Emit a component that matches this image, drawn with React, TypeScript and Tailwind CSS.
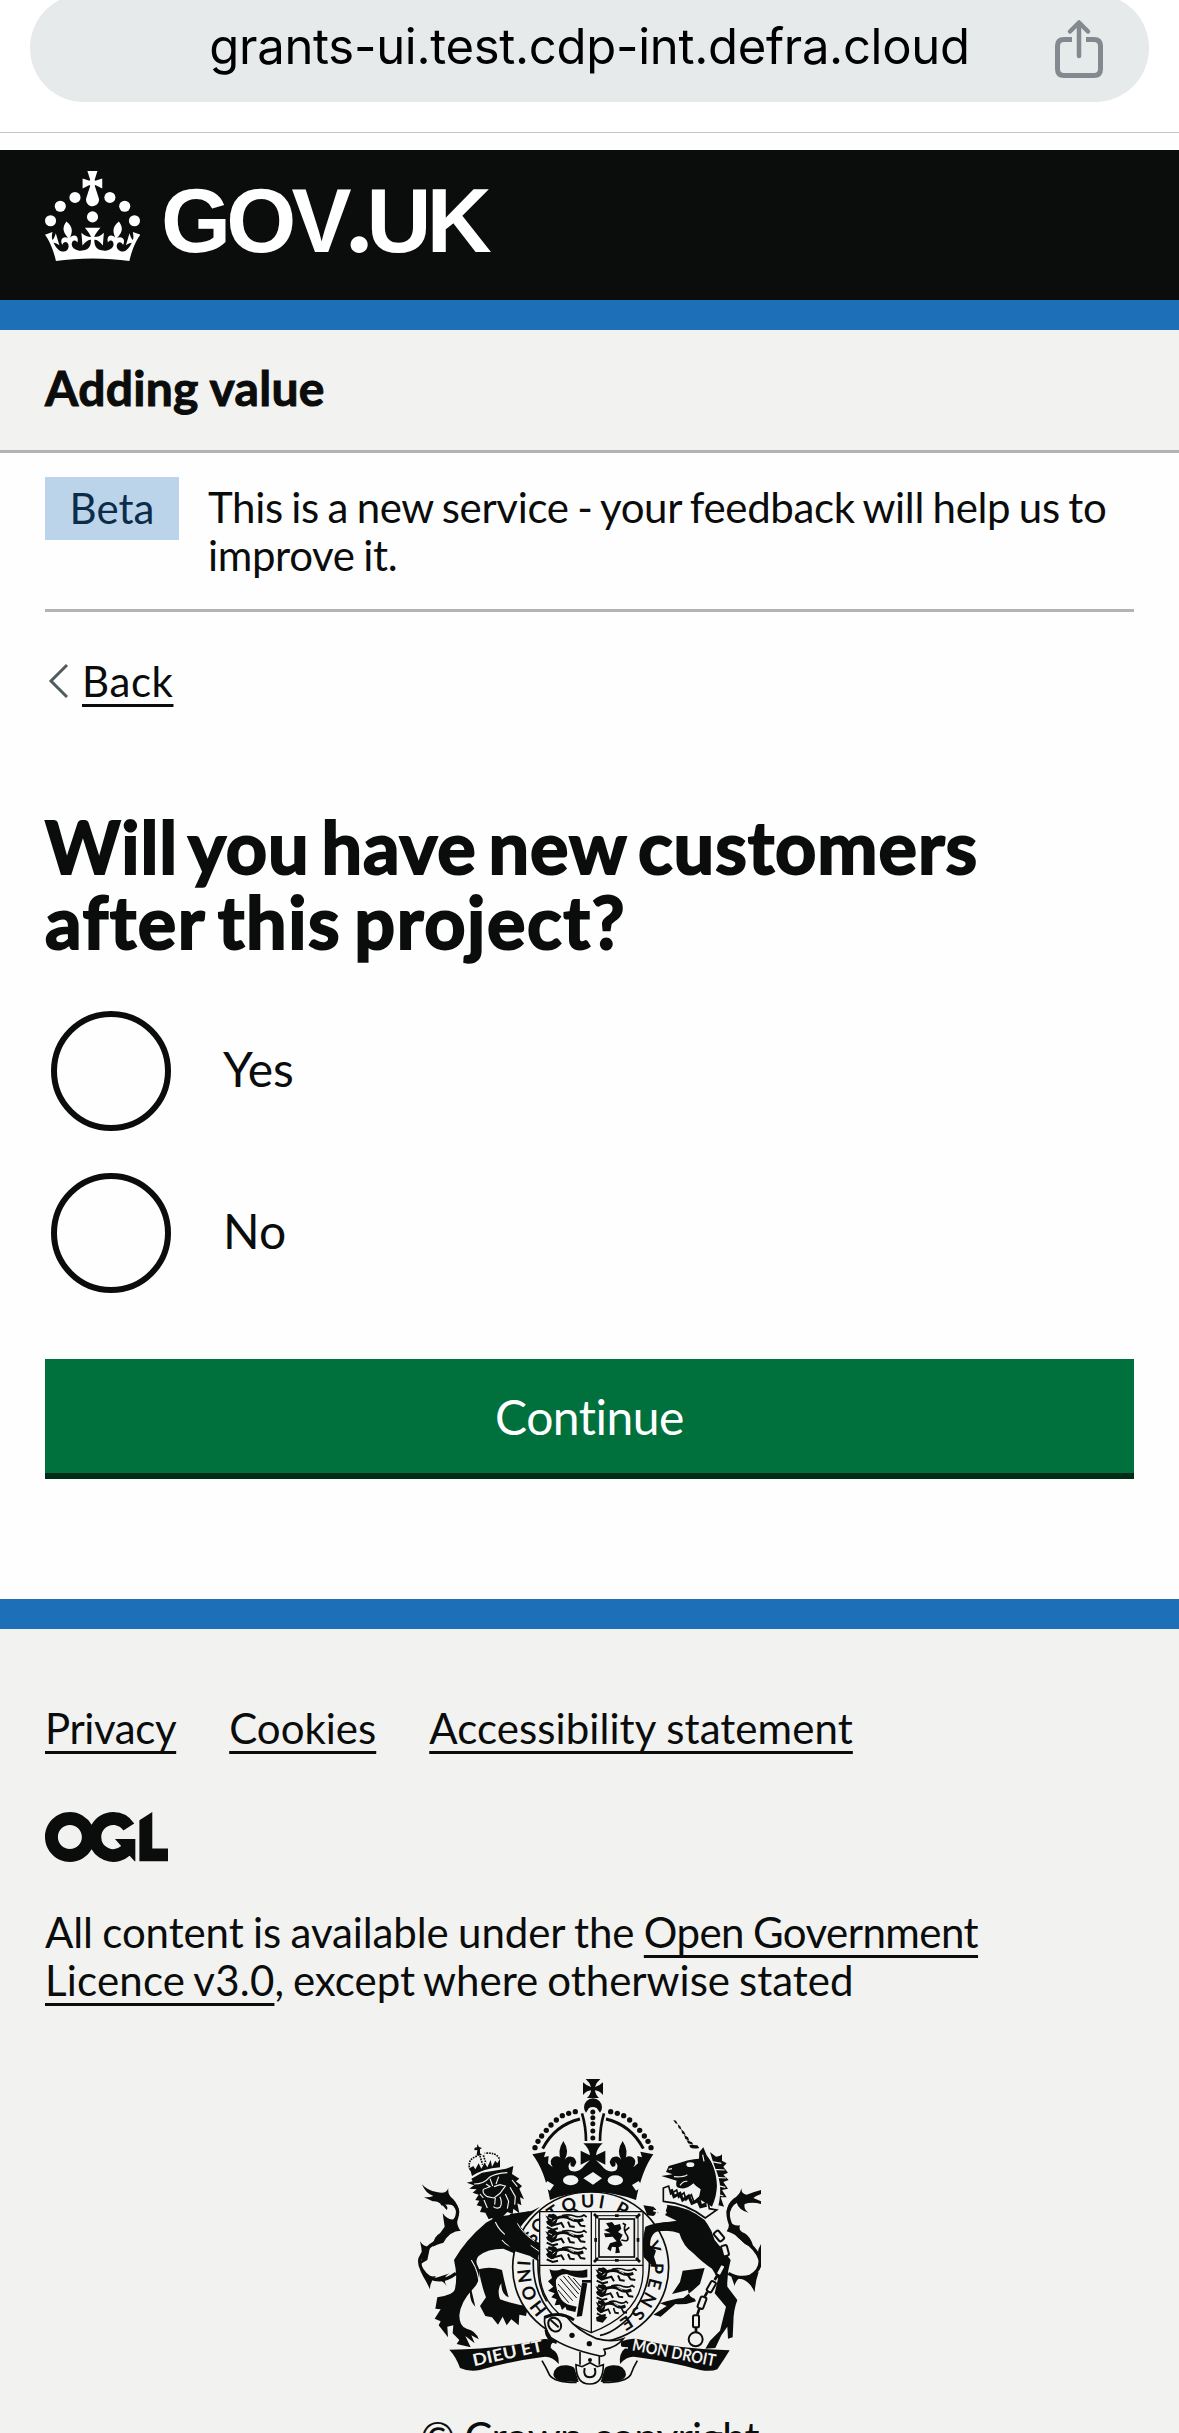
import React from "react";

function ShareIcon() {
  return (
    <svg width="48" height="60" viewBox="0 0 48 60" fill="none" stroke="#84898f" strokeWidth="5" className="mr-[46px] mt-[2px] justify-self-end">
      <path d="M17 20.500H9Q2.500 20.500 2.500 27V50Q2.500 56.500 9 56.500H39Q45.500 56.500 45.500 50V27Q45.500 20.500 39 20.500H31" />
      <path d="M24 37V4M15 12.500L24 3.500L33 12.500" strokeLinecap="round" strokeLinejoin="round" strokeWidth="4.500" />
    </svg>
  );
}

function Crown() {
  return (
    <svg width="95" height="90" viewBox="0 0 63.4 60" fill="#fff">
      <circle cx="20" cy="17.6" r="3.7" />
      <circle cx="10.2" cy="23.5" r="3.7" />
      <circle cx="3.7" cy="33.2" r="3.7" />
      <circle cx="31.7" cy="30.6" r="3.7" />
      <circle cx="43.3" cy="17.6" r="3.7" />
      <circle cx="53.2" cy="23.5" r="3.7" />
      <circle cx="59.7" cy="33.2" r="3.7" />
      <path d="M33.1,9.8c.2-.1.3-.3.5-.5l4.6,2.4v-6.8l-4.6,1.5c-.1-.2-.3-.3-.5-.5l1.9-5.900h-6.700l1.900,5.900c-.2.1-.3.3-.5.5l-4.600-1.500v6.800l4.600-2.400c.1.2.3.3.5.5l-2.600,8c-.9,2.800,1.200,5.700,4.100,5.700h0c3,0,5.100-2.900,4.100-5.700l-2.600-8ZM37,37.900s-3.400,3.800-4.100,6.100c2.200,0,4.200-.5,6.400-2.800l-.7,8.500c-2-2.800-4.400-4.100-5.700-3.800.1,3.100.5,6.700,5.800,7.200,3.700.3,6.700-1.500,7-3.800.4-2.600-2-4.300-3.700-1.600-1.400-4.500,2.400-6.100,4.900-3.200-1.900-4.500-1.800-7.700,2.400-10.900,3,4,2.600,7.300-1.200,11.100,2.400-1.300,6.200,0,4,4.600-1.200-2.800-3.700-2.200-4.200.2-.3,1.700.7,3.700,3,4.200,1.900.3,4.700-.9,7-5.900-1.300,0-2.400.7-3.900,1.700l2.400-8c.6,2.300,1.400,3.700,2.200,4.500.6-1.600.5-2.800,0-5.300l5,1.800c-2.600,3.600-5.200,8.700-7.300,17.500-7.400-1.100-15.700-1.700-24.500-1.700h0c-8.800,0-17.100.6-24.500,1.700-2.100-8.900-4.700-13.900-7.300-17.500l5-1.800c-.5,2.500-.6,3.700,0,5.300.8-.8,1.600-2.300,2.200-4.500l2.400,8c-1.500-1-2.600-1.700-3.900-1.700,2.300,5,5.200,6.200,7,5.900,2.300-.4,3.300-2.400,3-4.200-.5-2.400-3-3.100-4.200-.2-2.200-4.600,1.600-6,4-4.600-3.700-3.700-4.200-7.100-1.200-11.100,4.200,3.200,4.300,6.400,2.400,10.900,2.500-2.800,6.300-1.300,4.900,3.200-1.800-2.700-4.100-1-3.700,1.600.3,2.300,3.300,4.100,7,3.800,5.400-.5,5.700-4.200,5.800-7.200-1.300-.2-3.700,1-5.700,3.800l-.7-8.500c2.200,2.300,4.200,2.700,6.400,2.800-.7-2.300-4.100-6.100-4.100-6.100h10.600Z" />
    </svg>
  );
}

function OglMark() {
  return (
    <svg width="123" height="50" viewBox="0 0 483.2 195.7" fill="#0b0c0c">
      <path d="M421.500 142.800V.1l-50.700 32.300v161.100h112.400v-50.700zm-122.300-9.600A47.120 47.120 0 0 1 221 97.800c0-26 21.100-47.100 47.100-47.100 16.700 0 31.400 8.700 39.700 21.800l42.700-27.200A97.630 97.630 0 0 0 268.100 0c-36.500 0-68.300 20.100-85.100 49.700A98 98 0 0 0 97.800 0C43.900 0 0 43.900 0 97.800s43.900 97.800 97.800 97.800c36.500 0 68.300-20.100 85.100-49.700a97.760 97.760 0 0 0 149.600 25.400l19.400 22.200h3v-87.800h-80l24.300 27.500zM97.800 145c-26 0-47.100-21.100-47.100-47.100s21.100-47.100 47.100-47.100 47.100 21.100 47.100 47.100S123.800 145 97.800 145" />
    </svg>
  );
}

const INK = "#0b0c0c";
const PAPER = "#f2f2f0";

const leftPearls = [
  [526, 155], [506, 160], [487, 167], [469, 180], [453, 195], [439, 211], [425, 228], [414, 244], [405, 263],
];

/* Garter legend: each piece with its distance along the ring and its length. */
const garterLegend = [
  { words: "HONI", start: 142, length: 160 },
  { words: "SO", start: 352, length: 76 },
  { words: "TQUI P", start: 442, length: 230 },
  { words: "Y", start: 774, length: 34 },
  { words: "PENSE", start: 834, length: 208 },
];

/* One lion passant of the English quarters, about 126 units wide. */
function Passant({ x, y, s = 1 }: { x: number; y: number; s?: number }) {
  return (
    <g transform={`translate(${x} ${y}) scale(${s} 1)`}>
      <path d="M2 -17L8 -13L12 -21L20 -20L26 -22L34 -18L40 -10L36 4L28 16L20 18L8 10L4 2L10 -2z" fill={INK} />
      <path d="M34 -8Q60 -18 78 -6Q96 4 116 -4" stroke={INK} strokeWidth="9" fill="none" />
      <path d="M52 -16Q74 -22 92 -14Q108 -10 118 -18L126 -12" stroke={INK} strokeWidth="5" fill="none" />
      <path d="M28 12L50 6L58 20M70 2L76 16L90 18M100 2L108 14L122 16M6 18L24 26L40 22" stroke={INK} strokeWidth="6" fill="none" />
      <path d="M12 -10L22 -6M24 2L32 -4M72 -12L88 -4" stroke={PAPER} strokeWidth="2.500" />
    </g>
  );
}

function CoatOfArms() {
  return (
    <svg width="343" height="307" viewBox="54 54 1029 921" fill={INK} className="block">
      <defs>
        <path id="garter-ring" d="M571 802A180 180 0 0 1 571 442A180 180 0 0 1 571 802" />
        <path id="motto-left" d="M222 919Q330 895 436 872" />
        <path id="motto-right" d="M694 871Q830 897 950 921" />
      </defs>

      {/* tails */}
      <g fill="none" stroke={INK}>
        <path d="M168 640Q125 672 88 652Q54 628 60 596Q72 566 112 543Q170 505 173 455Q168 418 122 432" strokeWidth="10" />
        <path d="M985 640Q1020 660 1052 648Q1084 628 1080 598Q1070 566 1030 540Q984 505 984 455Q994 415 1030 425" strokeWidth="10" />
      </g>
      <path d="M66 373Q82 392 110 396Q140 404 145 383Q142 405 160 418Q180 440 176 468Q160 420 128 428Q148 440 140 450Q118 420 98 424L72 412Q92 412 100 408Q76 400 66 373zM128 460Q142 480 160 478L174 460Q166 495 182 512Q150 512 130 548Q112 552 98 560Q100 530 120 520L134 500zM60 544Q70 560 90 562L82 600L62 612Q70 580 60 544zM84 652L108 648Q90 664 90 688Q80 666 70 650L60 630zM104 655Q126 658 140 678Q124 650 150 640z" />
      <path d="M1024 385Q1024 402 1040 404Q1060 396 1083 390V402Q1066 408 1060 414L1083 424V432Q1056 424 1034 432Q1030 448 1046 458Q1016 450 1010 428Q990 440 988 470Q972 440 1000 416Q1020 406 1024 385zM986 480Q1000 500 1020 496Q1014 512 1034 520Q1052 530 1060 560Q1040 560 1026 544Q1006 520 980 514Q990 500 986 480zM1083 552Q1068 574 1076 600L1083 612zM1076 636Q1066 664 1064 697Q1050 664 1020 655L1050 645zM1018 655Q1006 664 1004 678L994 650z" />

      {/* lion */}
      <path d="M258 488L290 470L350 462L388 454L352 500Q372 528 400 540L432 556L440 580L432 606L410 588L414 604L390 586L396 600L362 588L310 566Q262 566 236 588Q222 602 236 624Q246 660 216 690Q182 726 178 766Q178 800 200 806Q228 812 236 838L214 826L224 850L196 828L212 862L170 852L178 840L158 820L160 796L142 800L144 832L116 796L122 784L104 776L122 748L106 746L112 712Q158 706 164 690Q174 650 162 600Q196 540 258 488z" />
      <path d="M236 628Q270 618 306 630Q314 670 326 712Q304 704 304 670Q290 690 300 718Q344 734 384 738L378 768L358 764L356 796L334 778L320 796L308 770L294 794L276 772L256 768L240 738L258 712Q244 676 236 628zM212 680L226 740Q204 720 212 680z" />
      <path d="M200 368L218 364L214 356L246 338L318 326L340 318L336 342L358 356L348 364L366 378L358 386L372 418L360 412L364 436L352 430L358 460L340 446L338 462L322 456L288 490L276 474L266 478L256 458L240 456L246 440L230 436L238 422L226 420L236 404L218 398L230 388L208 386L222 376z" />
      <g fill="none" stroke={PAPER} strokeWidth="3.500">
        <path d="M222 372Q252 372 268 352Q286 340 322 338M258 372L270 380L250 388Q246 400 262 410L282 414L300 400L316 378L300 374L282 380M270 356L278 378M296 350L288 372M286 414L284 434M300 410Q308 430 300 442Q290 448 280 440M316 402L326 424L322 446M330 382L346 410L344 434M336 360L352 380M252 420L262 444M240 402L250 414M286 486Q300 520 350 548M306 540Q320 560 360 570M214 600Q240 640 238 690M392 556L420 580M400 548L430 570" />
      </g>
      <path d="M232 252L237 261L246 264L240 268L240 280L246 284L234 288L230 284L232 270L223 271L224 263L231 262z" />
      <path d="M212 334L206 326L220 318L226 328L236 310L244 326L254 308L262 322L272 300L276 320L286 302L292 310L300 296L300 322Q250 326 216 348z" />
      <path d="M208 322Q204 296 232 288M298 296Q288 276 254 280M240 288L248 314M250 286L258 310" fill="none" stroke={INK} strokeWidth="5" strokeDasharray="5 3" />

      {/* unicorn */}
      <path d="M820 180L828 182L833 192L826 190zM833 193L841 199L845 210L836 204zM844 208L853 216L857 226L846 220zM852 224L864 232L868 242L856 237zM860 240L876 247L880 254L864 250zM868 254L892 256L898 264Q878 268 870 262z" />
      <path d="M897 296L898 276L910 262L920 286Q950 320 952 370Q950 410 936 440L896 416L902 388Q888 380 880 370Q860 390 838 384Q824 380 830 362L784 348L818 343L798 336L806 318L840 308Q862 300 882 298z" />
      <path d="M930 276L948 290Q964 288 966 282L966 302L980 310L970 320L984 338L970 344L986 360L970 366L984 386L966 390L980 412L962 412L972 440L956 436L950 456Q974 380 944 322z" />
      <path d="M926 288Q966 350 946 440M935 305L964 310M944 328L974 330M950 352L978 354M951 376L976 382M949 402L970 408M908 284L912 304M806 328L816 326M822 350Q850 352 862 344M840 376Q850 362 862 364" fill="none" stroke={PAPER} strokeWidth="3.500" />
      <ellipse cx="871" cy="314" rx="12" ry="7" fill={PAPER} />
      <path d="M790 384L806 378L812 402L830 390L836 412L852 398L858 420L874 404L882 426L898 412L904 436L924 426L928 446L950 450L916 474Q860 430 790 424z" fill={PAPER} stroke={INK} strokeWidth="5" />
      <path d="M814 388L822 410L840 400L848 420L866 408L876 430L894 422L902 440L920 436" fill="none" stroke={INK} strokeWidth="9" />
      <path d="M730 436L760 440L776 456L760 468L742 466zM800 434Q866 440 914 480Q924 494 934 512L944 540L972 574L992 600Q980 640 982 680L1012 720Q1000 750 1000 790L998 832L984 836L982 800L964 826L946 864L916 866L930 842L960 812L978 740L944 700L954 656L936 626Q910 610 880 580Q850 560 838 520Q812 508 776 514Q754 524 750 556L768 572L762 590L774 628L748 606L752 632L730 590L728 540L736 500Q760 490 830 482L796 466z" />
      <path d="M914 624L848 632L840 666L816 702L864 690Q866 712 884 716L888 724Q856 736 826 732L782 770L760 764L800 738L780 730Q820 716 850 714L880 690L900 672z" />
      <path d="M776 428L766 476M800 436L786 480M760 452L800 458M742 560Q764 580 768 620" fill="none" stroke={PAPER} strokeWidth="5" />
      <g fill={PAPER} stroke={INK} strokeWidth="6">
        <rect x="-9" y="-16" width="18" height="32" rx="5" transform="translate(957 528) rotate(-40)" />
        <rect x="-9" y="-16" width="18" height="32" rx="5" transform="translate(975 572) rotate(-15)" />
        <rect x="-8" y="-17" width="16" height="34" rx="5" transform="translate(962 630) rotate(28)" />
        <rect x="-8" y="-17" width="16" height="34" rx="5" transform="translate(934 680) rotate(30)" />
        <rect x="-9" y="-18" width="18" height="36" rx="5" transform="translate(906 728) rotate(20)" />
        <rect x="-9" y="-18" width="18" height="36" rx="5" transform="translate(888 784)" />
        <circle cx="887" cy="838" r="21" fill="none" />
      </g>
      <path d="M974 590L966 612M952 646L944 660M922 696L914 710M898 746L892 764M888 802V816" stroke={INK} strokeWidth="8" />

      {/* garter */}
      <ellipse cx="572" cy="622" rx="234" ry="226" fill={PAPER} stroke={INK} strokeWidth="5" />
      <path d="M400 598Q396 700 462 770M414 598Q412 680 440 724M748 598Q752 690 690 770Q640 820 600 826" fill="none" stroke={INK} strokeWidth="5" />
      <g style={{ fontFamily: "Lato" }} className="text-[54px] font-bold">
        {garterLegend.map((part) => (
          <text key={part.words}>
            <textPath href="#garter-ring" startOffset={part.start} textLength={part.length} lengthAdjust="spacing">
              {part.words}
            </textPath>
          </text>
        ))}
      </g>

      {/* lion's foreleg and unicorn's foreleg cross the garter */}
      <path d="M330 462L388 454Q398 452 420 440Q380 474 362 500Q376 524 412 546L436 556L440 580L424 572L440 600L416 584L414 604L390 588L340 572L310 540z" />
      <path d="M736 500Q760 490 800 486L812 512Q776 510 764 518Q750 530 750 556L768 572L762 590L774 628L748 610L730 590L728 540z" />
      <path d="M352 490Q368 520 404 544M392 556L420 576" fill="none" stroke={PAPER} strokeWidth="3" />

      {/* shield */}
      <path d="M419 455H729V640Q724 760 574 818Q424 760 419 640z" fill={PAPER} stroke={INK} strokeWidth="4" />
      <path d="M574 455V818M419 616H729" stroke={INK} strokeWidth="4" />
      <Passant x={434} y={483} />
      <Passant x={434} y={530} />
      <Passant x={434} y={580} />
      <g fill="none" stroke={INK}>
        <rect x="587" y="467" width="127" height="134" strokeWidth="3" />
        <rect x="597" y="477" width="106" height="114" strokeWidth="5" />
        <path d="M582 462L594 474M720 462L708 474M582 606L594 594M720 606L708 594" strokeWidth="8" />
        <path d="M645 467H656M645 601H656M587 534V545M714 534V545" strokeWidth="8" />
      </g>
      <path d="M618 490L636 486L644 496L660 492L664 506L654 516L668 524L660 540L668 556L656 562L660 578L646 580L648 562L636 560L632 574L622 566L630 550L650 544L638 530L616 532L612 520L632 520L612 510L628 504z" />
      <path d="M664 540Q690 548 682 528Q668 510 676 494L668 490M676 512L688 502" fill="none" stroke={INK} strokeWidth="5" />

      {/* harp */}
      <path d="M448 628Q466 636 488 626Q530 638 562 628V652Q530 656 500 642Q474 644 468 660Q466 684 478 708Q490 732 512 736L530 740L526 756L500 750L496 740L486 750L480 734L464 736L470 718L454 712L464 700L444 692L460 680L444 664L456 654z" />
      <path d="M546 668L562 670L546 768L530 770z" />
      <path d="M474 690L506 728M474 672L518 722M480 656L530 714M490 648L536 702M504 648L540 690M520 654L544 682" stroke={INK} strokeWidth="3" />
      <path d="M546 664H574" stroke={INK} strokeWidth="8" />
      <Passant x={584} y={644} />
      <Passant x={584} y={694} s={0.95} />
      <Passant x={586} y={742} s={0.78} />
      <path d="M588 772L606 764L622 772L608 788L590 784z" />

      {/* strap and buckle */}
      <path d="M434 770Q460 758 500 770Q530 810 590 836Q636 848 670 836Q650 862 612 868Q624 890 600 888Q500 866 452 832Q430 800 434 770z" fill={PAPER} stroke={INK} strokeWidth="5" />
      <path d="M434 772Q480 752 522 780M438 810Q440 840 470 848" fill="none" stroke={INK} strokeWidth="9" />
      <ellipse cx="464" cy="794" rx="18" ry="22" transform="rotate(-35 464 794)" fill={PAPER} stroke={INK} strokeWidth="6" />
      <path d="M452 780L476 802" stroke={INK} strokeWidth="6" />
      <circle cx="516" cy="826" r="8" />
      <circle cx="568" cy="851" r="8" />
      <path d="M540 876V914M598 888V914" stroke={INK} strokeWidth="5" />
      <circle cx="570" cy="900" r="6" />

      {/* motto scrolls */}
      <path d="M148 869Q300 868 432 837Q450 836 472 842Q444 850 456 868Q478 878 476 912Q452 884 424 892Q330 904 240 930Q206 936 180 924Q168 890 148 869z" />
      <path d="M989 871Q840 868 712 837Q690 834 664 844Q658 866 676 864Q656 880 660 912Q684 884 712 892Q806 904 900 930Q934 936 952 928Q974 896 989 871z" />
      <path d="M452 862L470 866M662 862L684 864" stroke={PAPER} strokeWidth="4" />
      <g fill={PAPER} style={{ fontFamily: "Lato" }} className="text-[50px] font-bold">
        <text><textPath href="#motto-left" textLength="214" lengthAdjust="spacingAndGlyphs">DIEU ET</textPath></text>
        <text><textPath href="#motto-right" textLength="254" lengthAdjust="spacingAndGlyphs">MON DROIT</textPath></text>
      </g>
      <path d="M426 902Q440 926 448 944Q464 968 530 967M712 902Q700 922 692 944Q676 968 608 967" fill="none" stroke={INK} strokeWidth="5" />
      <path d="M460 944Q464 914 500 916Q520 918 524 926L536 966L490 964Q462 960 460 944zM678 944Q674 914 638 916Q618 918 614 926L602 966L648 964Q676 960 678 944z" />
      <path d="M528 914L546 920L570 908L592 920L610 914Q610 972 569 972Q528 972 528 914z" fill={PAPER} stroke={INK} strokeWidth="5" />
      <path d="M554 924Q548 950 569 952Q592 950 584 924" fill="none" stroke={INK} strokeWidth="6" />

      {/* crown */}
      <path d="M557 57H601Q588 68 585 81Q598 78 609 67V105Q598 92 585 91Q586 104 597 114H561Q572 104 573 91Q560 92 549 105V67Q560 78 573 81Q570 68 557 57z" />
      <path d="M552 142A27 27 0 0 1 606 142Q606 152 600 158L590 144Q578 138 567 144L558 158Q552 152 552 142z" />
      <path d="M546 160Q558 200 558 243M612 160Q600 200 600 243" fill="none" stroke={INK} strokeWidth="8" />
      {[156, 173, 191, 213, 234].map((cy) => (
        <circle key={cy} cx="578.5" cy={cy} r="7.500" />
      ))}
      {leftPearls.map(([cx, cy]) => (
        <React.Fragment key={cx}>
          <circle cx={cx} cy={cy} r="8" />
          <circle cx={1158 - cx} cy={cy} r="8" />
        </React.Fragment>
      ))}
      <path d="M540 177Q465 195 428 266M618 177Q693 195 730 266" fill="none" stroke={INK} strokeWidth="9" />
      <path d="M397 283L437 275L432 292L446 288L444 310L458 322Q444 300 462 290Q482 286 484 300Q470 274 490 243Q510 272 494 300Q502 284 520 292Q536 304 522 320Q508 322 512 306Q498 320 512 332Q536 340 552 318L570 300L542 314V272L570 286Q568 266 550 250H608Q590 266 588 286L616 272V314L588 300L606 318Q622 340 646 332Q660 320 646 306Q650 322 636 320Q622 304 638 292Q656 284 664 300Q648 272 668 243Q688 274 674 300Q676 286 696 290Q714 300 700 322L714 310L712 288L726 292L721 275L760 283Q726 330 708 420Q640 396 579 396Q510 396 450 420Q434 330 397 283z" />
      <path d="M440 330Q480 350 579 338Q676 350 718 330L712 356H446z" />
      <path d="M430 380L442 363L462 375L450 392zM728 380L716 363L696 375L708 392zM550 355L579 336L606 355L579 374z" fill={PAPER} />
      <ellipse cx="512" cy="361" rx="23" ry="15" fill={PAPER} />
      <ellipse cx="646" cy="361" rx="23" ry="15" fill={PAPER} />
    </svg>
  );
}

function Radio({ label }: { label: string }) {
  return (
    <label className="flex h-[120px] items-center">
      <span className="h-[120px] w-[120px] rounded-full border-[6px] border-[#0b0c0c]" />
      <span className="ml-[52px] pb-[4px] text-[48px] leading-[60px]">{label}</span>
    </label>
  );
}

const link = "underline decoration-[3px] underline-offset-[7px]";

export default function App() {
  return (
    <div className="flex h-[2433px] w-[1179px] flex-col overflow-hidden bg-[#fefefe] font-['Lato',sans-serif] text-[#0b0c0c] [font-variant-ligatures:none]">
      <div className="h-[133px] shrink-0 overflow-hidden border-b border-[#c4c6c7] bg-white">
        <div className="mx-[30px] -mt-[6px] grid h-[108px] grid-cols-[1fr_auto_1fr] items-center rounded-full bg-[#e6eaeb]">
          <span />
          <span className="pb-[3px] font-['Inter',sans-serif] text-[49px] tracking-[-0.3px] text-black">grants-ui.test.cdp-int.defra.cloud</span>
          <ShareIcon />
        </div>
      </div>

      <header className="mt-[17px] shrink-0">
        <div className="flex h-[180px] items-start border-b-[30px] border-[#1d70b8] bg-[#0b0c0c] px-[45px] pt-[21px]">
          <Crown />
          <div className="mt-px ml-[21px] font-['Liberation_Sans',sans-serif] text-[90px] font-bold leading-[98px] tracking-[-4.800px] text-white">
            GOV<span className="font-['Lato',sans-serif] text-[104px] font-black leading-[0]">.</span>UK
          </div>
        </div>
        <div className="flex h-[123px] items-center border-b-[3px] border-[#b1b4b6] bg-[#f2f2f0] px-[45px] pb-[4px]">
          <span className="text-[48px] font-bold leading-[60px] tracking-[0.3px] [-webkit-text-stroke:1px]">Adding value</span>
        </div>
      </header>

      <main className="shrink-0 px-[45px]">
        <div className="flex h-[159px] items-start border-b-[3px] border-[#b1b4b6] pt-[24px] text-[42px] leading-[48px]">
          <strong className="flex h-[63px] w-[134px] items-center justify-center bg-[#bbd4ea] pb-[2px] font-normal text-[#0c2d4a]">Beta</strong>
          <p className="ml-[29px] mt-[6px] whitespace-nowrap tracking-[-0.350px] [word-spacing:-1.800px]">
            This is a new service - your feedback will help us to
            <br />
            improve it.
          </p>
        </div>

        <div className="mt-[45px] flex h-[48px] items-center text-[42px] leading-[48px]">
          <svg width="37" height="36" viewBox="0 0 37 36" fill="none" stroke="#505a5f" strokeWidth="3">
            <path d="M22 2L6 18L22 34" />
          </svg>
          <a className={`${link} tracking-[0.600px]`}>Back</a>
        </div>

        <h1 className="mt-[104px] whitespace-nowrap text-[72px] font-bold leading-[75px] [-webkit-text-stroke:2px]">
          <span className="tracking-[0.900px] [word-spacing:-6.500px]">Will you have new customers</span>
          <br />
          <span className="tracking-[1.550px] [word-spacing:-6px]">after this project?</span>
        </h1>

        <div className="ml-[6px] mt-[52px] flex flex-col gap-[42px]">
          <Radio label="Yes" />
          <Radio label="No" />
        </div>

        <button className="mt-[66px] flex h-[120px] w-full items-center justify-center border-b-[6px] border-[#002d18] bg-[#00703c] pt-[2px] text-[48px] leading-[60px] tracking-[-0.500px] text-white">
          Continue
        </button>
      </main>

      <footer className="mt-[120px] flex grow flex-col border-t-[30px] border-[#1d70b8] bg-[#f2f2f0] px-[45px] text-[42px] leading-[48px]">
        <nav className="mt-[75px] flex gap-[53px]">
          <a className={`${link} tracking-[-0.400px]`}>Privacy</a>
          <a className={link}>Cookies</a>
          <a className={`${link} tracking-[0.080px]`}>Accessibility statement</a>
        </nav>
        <div className="mt-[60px] h-[50px]">
          <OglMark />
        </div>
        <p className="mt-[46px] whitespace-nowrap">
          <span className="tracking-[-0.100px] [word-spacing:-1.200px]">
            All content is available under the{" "}
            <a className={`${link} tracking-[-0.550px]`}>Open Government</a>
          </span>
          <br />
          <span className="[word-spacing:-1.800px]">
            <a className={`${link} tracking-[0.200px]`}>Licence v3.0</a>, except where otherwise stated
          </span>
        </p>
        <div className="ml-[373px] mt-[74px] w-[343px]">
          <CoatOfArms />
          <div className="mt-[28px] whitespace-nowrap text-center tracking-[-0.800px]">© Crown copyright</div>
        </div>
      </footer>
    </div>
  );
}
